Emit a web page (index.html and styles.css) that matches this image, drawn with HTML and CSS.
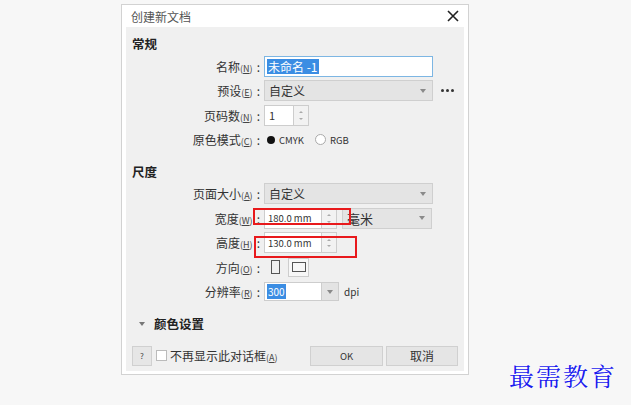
FILE: index.html
```html
<!DOCTYPE html>
<html lang="zh-CN">
<head>
<meta charset="utf-8">
<title>创建新文档</title>
<link rel="stylesheet" href="styles.css">
</head>
<body>
<div class="page">
  <div class="dialog">
    <div class="titlebar">
      <span class="title">创建新文档</span>
      <svg class="close" width="12" height="12" viewBox="0 0 12 12"><path d="M1 1 L11 11 M11 1 L1 11" stroke="#222" stroke-width="1.6" fill="none"/></svg>
    </div>
    <div class="panel">
      <div class="heading">常规</div>
      <div class="grid">
        <div class="lbl">名称<span class="acc">(<u>N</u>)</span><span class="colon">:</span></div>
        <div class="cell"><div class="input focus"><span class="selected">未命名 -1</span></div></div>

        <div class="lbl">预设<span class="acc">(<u>E</u>)</span><span class="colon">:</span></div>
        <div class="cell"><div class="select wide"><span>自定义</span><i class="arrow"></i></div><span class="more"><i></i><i></i><i></i></span></div>

        <div class="lbl">页码数<span class="acc">(<u>N</u>)</span><span class="colon">:</span></div>
        <div class="cell"><div class="spin"><div class="num">1</div><div class="btns"><i class="up"></i><i class="down"></i></div></div></div>

        <div class="lbl">原色模式<span class="acc">(<u>C</u>)</span><span class="colon">:</span></div>
        <div class="cell radios"><span class="radio"><i class="dot"></i>CMYK</span><span class="radio"><i class="ring"></i>RGB</span></div>
      </div>

      <div class="heading h2">尺度</div>
      <div class="grid">
        <div class="lbl">页面大小<span class="acc">(<u>A</u>)</span><span class="colon">:</span></div>
        <div class="cell"><div class="select wide"><span>自定义</span><i class="arrow"></i></div></div>

        <div class="lbl">宽度<span class="acc">(<u>W</u>)</span><span class="colon">:</span></div>
        <div class="cell"><div class="spin"><div class="num mm">180.0 mm</div><div class="btns"><i class="up"></i><i class="down"></i></div></div><div class="select unit"><span>毫米</span><i class="arrow"></i></div></div>

        <div class="lbl">高度<span class="acc">(<u>H</u>)</span><span class="colon">:</span></div>
        <div class="cell"><div class="spin"><div class="num mm">130.0 mm</div><div class="btns"><i class="up"></i><i class="down"></i></div></div></div>

        <div class="lbl">方向<span class="acc">(<u>O</u>)</span><span class="colon">:</span></div>
        <div class="cell orient">
          <span class="obtn plain"><i class="portrait"></i></span>
          <span class="obtn boxed"><i class="landscape"></i></span>
        </div>

        <div class="lbl">分辨率<span class="acc">(<u>R</u>)</span><span class="colon">:</span></div>
        <div class="cell"><div class="combo"><div class="num dpi"><span class="selected">300</span></div><div class="drop"><i class="arrow"></i></div></div><span class="unitlabel">dpi</span></div>
      </div>

      <div class="heading h3"><i class="tri"></i>颜色设置</div>

      <div class="footer">
        <span class="help">?</span>
        <span class="check"></span>
        <span class="checktext">不再显示此对话框<span class="acc">(<u>A</u>)</span></span>
        <span class="spacer"></span>
        <span class="btn ok">OK</span>
        <span class="btn cancel">取消</span>
      </div>
    </div>
  </div>
  <div class="redbox r1"></div>
  <div class="redbox r2"></div>
  <div class="watermark">最需教育</div>
</div>
</body>
</html>
```
FILE: styles.css
```css
html, body {
  margin: 0;
  padding: 0;
}
body {
  background: #f7f7f7;
  font-family: "Noto Sans CJK SC", "Noto Sans", sans-serif;
  color: #333;
  width: 631px;
  height: 405px;
  overflow: hidden;
}
.page {
  position: relative;
  width: 631px;
  height: 405px;
  box-sizing: border-box;
  padding: 4px 0 0 121px;
}
.dialog {
  width: 348px;
  height: 371px;
  box-sizing: border-box;
  border: 1px solid #d2d2d2;
  background: #fff;
  display: flex;
  flex-direction: column;
}
.titlebar {
  height: 22px;
  flex: none;
  display: flex;
  align-items: center;
  justify-content: space-between;
  padding: 0 9px 0 9px;
}
.title {
  font-size: 12px;
  color: #555;
}
.panel {
  flex: 1;
  margin: 0 4px 4px 4px;
  background: #f0f0f0;
  padding: 6px 6px 5px 6px;
  display: flex;
  flex-direction: column;
}
.heading {
  font-size: 12.5px;
  font-weight: 700;
  line-height: 21px;
  color: #222;
}
.h2 { margin-top: 8.5px; }
.h3 {
  margin-top: 9px;
  display: flex;
  align-items: center;
  padding-left: 7px;
}
.tri {
  width: 0;
  height: 0;
  border-left: 3.5px solid transparent;
  border-right: 3.5px solid transparent;
  border-top: 4px solid #777;
  margin-right: 9px;
}
.grid {
  display: grid;
  grid-template-columns: 130px 1fr;
  column-gap: 2px;
  grid-auto-rows: 24.5px;
  align-items: center;
}
.lbl {
  text-align: right;
  white-space: nowrap;
  font-size: 12px;
  color: #333;
  padding-right: 2px;
}
.acc {
  font-size: 9px;
  color: #444;
}
.colon {
  margin-left: 4px;
}
.cell {
  display: flex;
  align-items: center;
}
.input {
  width: 169px;
  height: 21px;
  box-sizing: border-box;
  background: #fff;
  border: 1px solid #cdcdcd;
  display: flex;
  align-items: center;
  padding-left: 2px;
  font-size: 12px;
}
.input.focus {
  border-color: #7db6e3;
}
.selected {
  background: #3b8de3;
  color: #fff;
  line-height: 15px;
  padding: 0 1px;
}
.select {
  height: 21px;
  box-sizing: border-box;
  border: 1px solid #cfcfcf;
  background: #e4e4e4;
  display: flex;
  align-items: center;
  justify-content: space-between;
  padding-left: 4px;
  font-size: 12px;
  color: #333;
}
.select.wide { width: 169px; }
.select.unit {
  width: 90px;
  margin-left: 5px;
  font-size: 13px;
}
.arrow {
  width: 0;
  height: 0;
  border-left: 3.5px solid transparent;
  border-right: 3.5px solid transparent;
  border-top: 4px solid #8a8a8a;
  margin-right: 6px;
}
.more {
  display: inline-flex;
  gap: 2px;
  margin-left: 8px;
}
.more i {
  width: 3px;
  height: 3px;
  border-radius: 50%;
  background: #333;
}
.spin {
  display: flex;
  height: 21px;
}
.num {
  width: 30px;
  box-sizing: border-box;
  border: 1px solid #cdcdcd;
  background: #fff;
  font-size: 11px;
  display: flex;
  align-items: center;
  padding-left: 4px;
}
.num.mm {
  width: 58px;
  font-size: 9.5px;
  padding-left: 3px;
}
.btns {
  width: 15px;
  box-sizing: border-box;
  border: 1px solid #cdcdcd;
  border-left: none;
  background: #f2f2f2;
  display: flex;
  flex-direction: column;
  align-items: center;
  justify-content: space-around;
  padding: 3px 0;
}
.up, .down {
  width: 0;
  height: 0;
  border-left: 2px solid transparent;
  border-right: 2px solid transparent;
}
.up { border-bottom: 2px solid #aaa; }
.down { border-top: 2px solid #aaa; }
.radios {
  gap: 11px;
  padding-left: 3px;
}
.radio {
  display: inline-flex;
  align-items: center;
  font-size: 9.5px;
  color: #333;
}
.dot {
  width: 8px;
  height: 8px;
  border-radius: 50%;
  background: #111;
  margin-right: 4px;
}
.ring {
  width: 9px;
  height: 9px;
  border-radius: 50%;
  border: 1px solid #aaa;
  background: #fff;
  margin-right: 4px;
}
.orient {
  gap: 6px;
  padding-left: 4px;
}
.obtn {
  display: inline-flex;
  align-items: center;
  justify-content: center;
  width: 14px;
  height: 19px;
  box-sizing: border-box;
}
.obtn.boxed {
  width: 21px;
  border: 1px solid #cdcdcd;
  background: #f7f7f7;
}
.portrait {
  width: 9px;
  height: 14px;
  box-sizing: border-box;
  border: 1px solid #555;
}
.landscape {
  width: 14px;
  height: 10px;
  box-sizing: border-box;
  border: 1px solid #555;
}
.combo {
  display: flex;
  height: 19px;
}
.num.dpi {
  width: 58px;
  font-size: 10px;
  padding-left: 2px;
}
.drop {
  width: 17px;
  box-sizing: border-box;
  border: 1px solid #cdcdcd;
  border-left: none;
  background: #e3e3e3;
  display: flex;
  align-items: center;
  justify-content: center;
}
.drop .arrow { margin-right: 0; }
.unitlabel {
  margin-left: 5px;
  font-size: 10px;
  color: #333;
}
.footer {
  margin-top: 11.5px;
  height: 20px;
  display: flex;
  align-items: center;
}
.help {
  width: 20px;
  height: 20px;
  box-sizing: border-box;
  border: 1px solid #d0d0d0;
  background: #e6e6e6;
  font-size: 8px;
  display: flex;
  align-items: center;
  justify-content: center;
  color: #444;
}
.check {
  width: 11px;
  height: 11px;
  box-sizing: border-box;
  border: 1px solid #bbb;
  background: #fff;
  margin-left: 4px;
}
.checktext {
  font-size: 12px;
  margin-left: 3px;
  color: #333;
}
.spacer { flex: 1; }
.btn {
  height: 20px;
  box-sizing: border-box;
  border: 1px solid #d0d0d0;
  background: #e5e5e5;
  display: flex;
  align-items: center;
  justify-content: center;
  color: #333;
}
.btn.ok {
  width: 73px;
  font-size: 9.5px;
}
.btn.cancel {
  width: 72px;
  margin-left: 3px;
  font-size: 12px;
}
.redbox {
  position: absolute;
  border: 2px solid #e8191c;
  box-sizing: border-box;
}
.r1 {
  left: 253px;
  top: 208px;
  width: 98px;
  height: 17px;
}
.r2 {
  left: 254px;
  top: 236px;
  width: 103px;
  height: 22px;
}
.watermark {
  position: absolute;
  left: 509px;
  top: 359px;
  font-family: "Noto Serif CJK SC", "Noto Sans CJK SC", serif;
  font-size: 25px;
  font-weight: 400;
  line-height: 32px;
  letter-spacing: 2px;
  color: #1a1aee;
  text-shadow: 0 0 2px #fff, 0 0 2px #fff;
}
```
